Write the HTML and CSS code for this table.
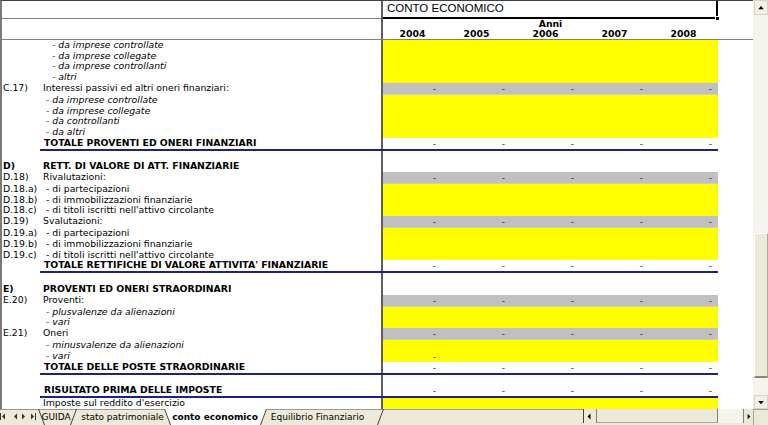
FILE: index.html
```html
<!DOCTYPE html>
<html lang="it">
<head>
<meta charset="utf-8">
<title>Conto economico</title>
<link rel="stylesheet" href="styles.css">
</head>
<body>
<div class="main">
  <div class="sheet">
    <div class="ha">
      <span class="hl"></span><i class="dv"></i>
      <span class="title">CONTO ECONOMICO<span class="handle"></span></span>
      <span></span>
    </div>
    <div class="hb">
      <i class="dv"></i>
      <span class="anni">Anni</span>
      <span class="yrs"><b>2004</b><b>2005</b><b>2006</b><b>2007</b><b>2008</b></span>
    </div>
    <div class="rows">
      <div class="r y"><span class="c"></span><span class="l it i2">- da imprese controllate</span><i class="dv"></i><span class="v"></span><span></span></div>
      <div class="r y"><span class="c"></span><span class="l it i2">- da imprese collegate</span><i class="dv"></i><span class="v"></span><span></span></div>
      <div class="r y"><span class="c"></span><span class="l it i2">- da imprese controllanti</span><i class="dv"></i><span class="v"></span><span></span></div>
      <div class="r y"><span class="c"></span><span class="l it i2">- altri</span><i class="dv"></i><span class="v"></span><span></span></div>
      <div class="r g"><span class="c">C.17)</span><span class="l">Interessi passivi ed altri oneri finanziari:</span><i class="dv"></i><span class="v"><b>-</b><b>-</b><b>-</b><b>-</b><b>-</b></span><span></span></div>
      <div class="r y"><span class="c"></span><span class="l it i1">- da imprese controllate</span><i class="dv"></i><span class="v"></span><span></span></div>
      <div class="r y"><span class="c"></span><span class="l it i1">- da imprese collegate</span><i class="dv"></i><span class="v"></span><span></span></div>
      <div class="r y"><span class="c"></span><span class="l it i1">- da controllanti</span><i class="dv"></i><span class="v"></span><span></span></div>
      <div class="r y"><span class="c"></span><span class="l it i1">- da altri</span><i class="dv"></i><span class="v"></span><span></span></div>
      <div class="r t"><span class="c"></span><span class="l bd">TOTALE PROVENTI ED ONERI FINANZIARI</span><i class="dv"></i><span class="v"><b>-</b><b>-</b><b>-</b><b>-</b><b>-</b></span><span></span></div>
      <div class="r"><span class="c"></span><span class="l"></span><i class="dv"></i><span class="v"></span><span></span></div>
      <div class="r"><span class="c bd">D)</span><span class="l bd">RETT. DI VALORE DI ATT. FINANZIARIE</span><i class="dv"></i><span class="v"></span><span></span></div>
      <div class="r g"><span class="c">D.18)</span><span class="l">Rivalutazioni:</span><i class="dv"></i><span class="v"><b>-</b><b>-</b><b>-</b><b>-</b><b>-</b></span><span></span></div>
      <div class="r y"><span class="c">D.18.a)</span><span class="l i1">- di partecipazioni</span><i class="dv"></i><span class="v"></span><span></span></div>
      <div class="r y"><span class="c">D.18.b)</span><span class="l i1">- di immobilizzazioni finanziarie</span><i class="dv"></i><span class="v"></span><span></span></div>
      <div class="r y"><span class="c">D.18.c)</span><span class="l i1">- di titoli iscritti nell'attivo circolante</span><i class="dv"></i><span class="v"></span><span></span></div>
      <div class="r g"><span class="c">D.19)</span><span class="l">Svalutazioni:</span><i class="dv"></i><span class="v"><b>-</b><b>-</b><b>-</b><b>-</b><b>-</b></span><span></span></div>
      <div class="r y"><span class="c">D.19.a)</span><span class="l i1">- di partecipazioni</span><i class="dv"></i><span class="v"></span><span></span></div>
      <div class="r y"><span class="c">D.19.b)</span><span class="l i1">- di immobilizzazioni finanziarie</span><i class="dv"></i><span class="v"></span><span></span></div>
      <div class="r y"><span class="c">D.19.c)</span><span class="l i1">- di titoli iscritti nell'attivo circolante</span><i class="dv"></i><span class="v"></span><span></span></div>
      <div class="r t"><span class="c"></span><span class="l bd">TOTALE RETTIFICHE DI VALORE ATTIVITA' FINANZIARIE</span><i class="dv"></i><span class="v"><b>-</b><b>-</b><b>-</b><b>-</b><b>-</b></span><span></span></div>
      <div class="r"><span class="c"></span><span class="l"></span><i class="dv"></i><span class="v"></span><span></span></div>
      <div class="r"><span class="c bd">E)</span><span class="l bd">PROVENTI ED ONERI STRAORDINARI</span><i class="dv"></i><span class="v"></span><span></span></div>
      <div class="r g"><span class="c">E.20)</span><span class="l">Proventi:</span><i class="dv"></i><span class="v"><b>-</b><b>-</b><b>-</b><b>-</b><b>-</b></span><span></span></div>
      <div class="r y"><span class="c"></span><span class="l it i1">- plusvalenze da alienazioni</span><i class="dv"></i><span class="v"></span><span></span></div>
      <div class="r y"><span class="c"></span><span class="l it i1">- vari</span><i class="dv"></i><span class="v"></span><span></span></div>
      <div class="r g"><span class="c">E.21)</span><span class="l">Oneri</span><i class="dv"></i><span class="v"><b>-</b><b>-</b><b>-</b><b>-</b><b>-</b></span><span></span></div>
      <div class="r y"><span class="c"></span><span class="l it i1">- minusvalenze da alienazioni</span><i class="dv"></i><span class="v"></span><span></span></div>
      <div class="r y"><span class="c"></span><span class="l it i1">- vari</span><i class="dv"></i><span class="v"><b>-</b></span><span></span></div>
      <div class="r t"><span class="c"></span><span class="l bd">TOTALE DELLE POSTE STRAORDINARIE</span><i class="dv"></i><span class="v"><b>-</b><b>-</b><b>-</b><b>-</b><b>-</b></span><span></span></div>
      <div class="r"><span class="c"></span><span class="l"></span><i class="dv"></i><span class="v"></span><span></span></div>
      <div class="r t"><span class="c"></span><span class="l bd">RISULTATO PRIMA DELLE IMPOSTE</span><i class="dv"></i><span class="v"><b>-</b><b>-</b><b>-</b><b>-</b><b>-</b></span><span></span></div>
      <div class="r y"><span class="c"></span><span class="l">Imposte sul reddito d'esercizio</span><i class="dv"></i><span class="v"></span><span></span></div>
    </div>
  </div>
  <div class="vs">
    <div class="sbtn"><svg width="13" height="13" viewBox="0 0 13 13"><path d="M3.5 8.5 L6.5 5 L9.5 8.5Z" fill="#000"/></svg></div>
    <div class="vgap1"></div>
    <div class="vthumb"></div>
    <div class="vgap2"></div>
    <div class="sbtn"><svg width="13" height="12" viewBox="0 0 13 12"><path d="M3.5 5 L6.5 8.5 L9.5 5Z" fill="#000"/></svg></div>
  </div>
</div>
<div class="tabbar">
  <svg class="tabs" width="583" height="16" viewBox="0 0 583 16">
    <g fill="#333">
      <rect x="0" y="4" width="1" height="7"/>
      <path d="M5 4.5 L2 7.5 L5 10.5Z"/>
      <path d="M17 4.5 L14 7.5 L17 10.5Z"/>
      <path d="M22 4.5 L25 7.5 L22 10.5Z"/>
      <path d="M31 4.5 L34 7.5 L31 10.5Z"/>
      <rect x="35" y="4" width="1" height="7"/>
    </g>
    <path d="M0 0.5 H164 M267 0.5 H583" stroke="#9a9a9a" stroke-width="1"/>
    <polygon points="164,0 170,16 261,16 267,0" fill="#fff"/>
    <g stroke="#404040" stroke-width="1" fill="none">
      <path d="M38.5 0 L44.5 16"/>
      <path d="M70.5 16 L76.5 0"/>
      <path d="M164.5 0 L170.5 16"/>
      <path d="M260.5 16 L266.5 0"/>
      <path d="M377.5 16 L383.5 0"/>
    </g>
    <g font-family="DejaVu Sans, Verdana, sans-serif" font-size="9" fill="#000" text-anchor="middle">
      <text x="56" y="11">GUIDA</text>
      <text x="122.5" y="11">stato patrimoniale</text>
      <text x="215" y="11" font-weight="bold">conto economico</text>
      <text x="317.5" y="11">Equilibrio Finanziario</text>
    </g>
  </svg>
  <div class="hs">
    <div class="hsplit"></div>
    <div class="hbtn hl-btn"><svg width="12" height="13" viewBox="0 0 12 13"><path d="M6.5 3.5 L3.5 6.5 L6.5 9.5Z" fill="#000"/></svg></div>
    <div class="hthumb"></div>
    <div class="htrack"></div>
    <div class="hbtn hr-btn"><svg width="10" height="13" viewBox="0 0 10 13"><path d="M4 3.5 L7 6.5 L4 9.5Z" fill="#000"/></svg></div>
  </div>
  <div class="corner"></div>
</div>
</body>
</html>
```

FILE: styles.css
```css
* { box-sizing: border-box; margin: 0; padding: 0; }
html, body { width: 768px; height: 425px; overflow: hidden; background: #fff; }
body {
  font-family: "DejaVu Sans", Verdana, sans-serif;
  font-size: 9.3px;
  color: #000;
  display: flex;
  flex-direction: column;
}
.main { display: flex; height: 409px; }
.sheet {
  width: 753px;
  border-left: 2px solid #7a7a7a;
  border-top: 1px solid #404040;
  display: flex;
  flex-direction: column;
}
.dv { background: #5e5e5e; display: block; }

.ha {
  display: grid;
  grid-template-columns: 379px 2px 335px 35px;
  height: 18px;
}
.hl { border-bottom: 1px solid #7f7f7f; }
.title {
  position: relative;
  border-right: 2px solid #000;
  border-bottom: 2px solid #000;
  padding-left: 4px;
  font-family: "Liberation Sans", Arial, sans-serif;
  font-size: 11.5px;
  line-height: 15px;
}
.handle {
  position: absolute;
  right: -4px;
  bottom: -4px;
  width: 5px;
  height: 5px;
  background: #000;
  border: 1px solid #fff;
}

.hb {
  display: grid;
  grid-template-columns: 379px 2px 335px 35px;
  grid-template-rows: 10px 10px;
  height: 21px;
  border-bottom: 1px solid #808080;
  line-height: 10px;
  font-weight: bold;
}
.hb .dv { grid-column: 2; grid-row: 1 / 3; }
.anni { grid-column: 3; grid-row: 1; text-align: center; }
.yrs {
  grid-column: 3;
  grid-row: 2;
  display: grid;
  grid-template-columns: 59px repeat(4, 69px);
}
.yrs b { text-align: center; }

.rows { flex: 1; display: flex; flex-direction: column; }
.r {
  flex: 1;
  display: grid;
  grid-template-columns: 38px 341px 2px 335px 35px;
  line-height: 10px;
  white-space: nowrap;
}
.c { padding-left: 1px; }
.l { padding-left: 3px; overflow: hidden; }
.bd { font-weight: bold; }
.it { font-style: italic; }
.i1 { padding-left: 6px; }
.i2 { padding-left: 12px; }
.t .l { padding-left: 4px; }
.v {
  display: grid;
  grid-template-columns: 59px repeat(4, 69px);
}
.v b {
  font-weight: normal;
  text-align: right;
  padding-right: 6px;
  color: #333;
  line-height: 11px;
}
.y .v { background: #ffff00; }
.g .v { background: #c0c0c0; border-bottom: 1px solid #c9c9e6; }
.t .l, .t .dv, .t .v { border-bottom: 2px solid #1e1e8c; }

.vs {
  width: 15px;
  display: flex;
  flex-direction: column;
  background: #f4f3ee;
  padding-left: 1px;
}
.sbtn {
  height: 15px;
  background: #f1efe6;
  border: 1px solid #d8d5c8;
  display: flex;
  align-items: center;
  justify-content: center;
}
.sbtn:last-child { height: 14px; }
.vgap1 { height: 218px; }
.vthumb {
  height: 145px;
  background: #ece9d8;
  border-top: 1px solid #fff;
  border-left: 1px solid #fff;
  border-right: 1px solid #aca899;
  border-bottom: 2px solid #8a8778;
}
.vgap2 { flex: 1; }

.tabbar {
  flex: 1;
  display: flex;
  background: #ece9d8;
}
.tabs { display: block; flex: none; }
.hs { width: 170px; display: flex; height: 14px; }
.hsplit { width: 1px; background: #404040; }
.hbtn { display: flex; align-items: center; justify-content: center; background: #ece9d8; }
.hl-btn { width: 13px; border-right: 1px solid #808080; }
.hr-btn { width: 10px; border-left: 1px solid #808080; }
.hthumb {
  width: 121px;
  background: #ece9d8;
  border-right: 1px solid #808080;
  border-bottom: 1px solid #aca899;
}
.htrack { flex: 1; background: #f4f3ee; }
.corner {
  width: 15px;
  border-left: 1px solid #a0a0a0;
  border-top: 1px solid #a0a0a0;
  background: #ece9d8;
}
```
